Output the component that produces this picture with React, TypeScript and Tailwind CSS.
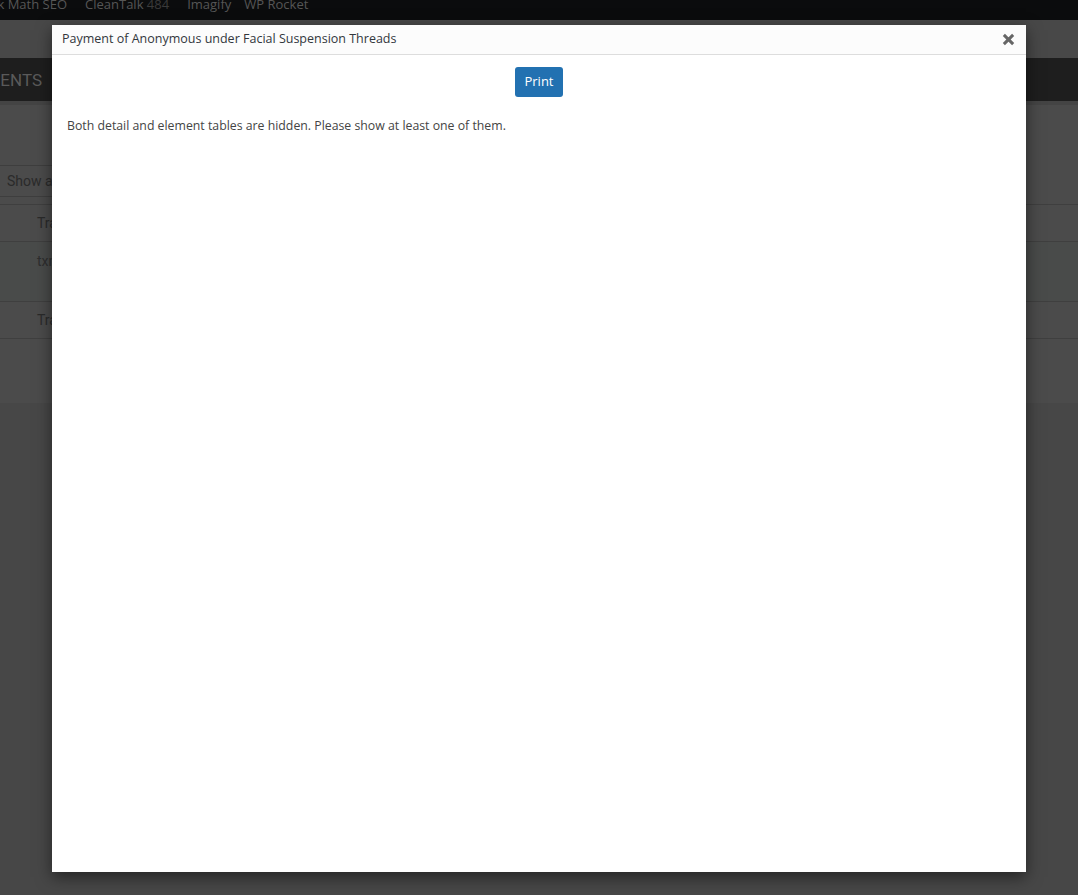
import React from "react";

function AdminBar() {
  return (
    <div className="h-[20px] overflow-hidden bg-[#0b0c0d] font-['Open_Sans',sans-serif] text-[13px] text-[#565656]">
      <div className="-mt-[6px] flex items-center leading-[20px]">
        <div className="flex w-[67px] shrink-0 justify-end whitespace-nowrap">
          <span>Rank Math SEO</span>
        </div>
        <span className="ml-[18px] whitespace-nowrap">
          CleanTalk <span className="text-[#3a3a3a]">484</span>
        </span>
        <span className="ml-[18px]">Imagify</span>
        <span className="ml-[13px] whitespace-nowrap">WP Rocket</span>
      </div>
    </div>
  );
}

function Backdrop() {
  return (
    <div className="min-h-[895px] bg-[#474747] font-['Roboto',sans-serif]">
      <AdminBar />
      <div className="h-[38px] bg-[#484848]" />
      <div className="flex h-[43px] items-center bg-[#1e1e1e] pt-[2px]">
        <div className="flex w-[42px] shrink-0 justify-end whitespace-nowrap">
          <span className="text-[17px] uppercase text-[#5a5a5a]">Elements</span>
        </div>
      </div>
      <div className="h-[4px] bg-[#444444]" />
      <div className="bg-[#4b4b4b] pb-[64px]">
        <div className="h-[60px]" />
        <div className="flex h-[32px] w-[120px] items-center border-y border-r border-[#3e3e3e] pl-[7px] text-[14px] text-[#2a2a2a]">
          Show all
        </div>
        <div className="mt-[7px] border-t border-[#3f3f3f]">
          <div className="flex h-[37px] items-center border-b border-[#3f3f3f] pl-[37px] text-[14px] text-[#2a2a2a]">
            Transaction
          </div>
          <div className="h-[60px] border-b border-[#3f3f3f] bg-[#494b4a] pl-[37px] pt-[9px] text-[14px] text-[#2e2e2e]">
            txn_0001
          </div>
          <div className="flex h-[37px] items-center border-b border-[#3f3f3f] pl-[37px] text-[14px] text-[#2a2a2a]">
            Transaction
          </div>
        </div>
      </div>
    </div>
  );
}

function Modal() {
  return (
    <div className="absolute left-[52px] top-[25px] flex h-[847px] w-[974px] flex-col bg-white font-['Open_Sans',sans-serif] shadow-[0_5px_15px_rgba(0,0,0,0.5)]">
      <div className="flex h-[30px] items-center justify-between border-b border-[#dddddd] bg-[#fcfcfc] pl-[10px] pr-[8px]">
        <h1 className="text-[12.5px] font-normal text-[#32373c]">
          Payment of Anonymous under Facial Suspension Threads
        </h1>
        <button className="flex h-[20px] w-[20px] items-center justify-center text-[#666666]">
          <svg width="13" height="13" viewBox="0 0 14 14">
            <path d="M2 2 L12 12 M12 2 L2 12" stroke="currentColor" strokeWidth="3.2" strokeLinecap="butt" />
          </svg>
        </button>
      </div>
      <div className="px-[15px] pt-[12px]">
        <div className="flex justify-center">
          <button className="h-[30px] w-[48px] rounded-[3px] bg-[#2271b1] text-[13px] font-normal text-white">
            Print
          </button>
        </div>
        <p className="mt-[20px] text-[12.3px] text-[#444444]">
          Both detail and element tables are hidden. Please show at least one of them.
        </p>
      </div>
    </div>
  );
}

export default function App() {
  return (
    <div className="relative h-[895px] w-[1078px] overflow-hidden">
      <Backdrop />
      <Modal />
    </div>
  );
}
